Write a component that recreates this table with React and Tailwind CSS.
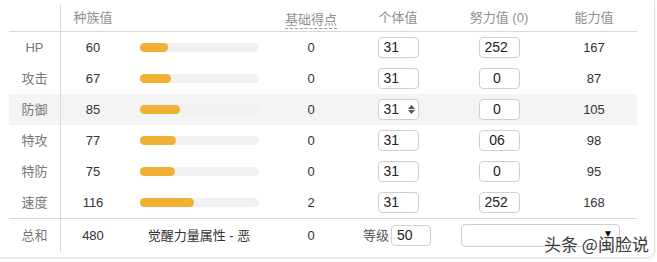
import React from "react";

const stats = [
  { label: "HP", base: 60, ev0: "0", iv: "31", ev: "252", total: 167 },
  { label: "攻击", base: 67, ev0: "0", iv: "31", ev: "0", total: 87 },
  { label: "防御", base: 85, ev0: "0", iv: "31", ev: "0", total: 105, hover: true },
  { label: "特攻", base: 77, ev0: "0", iv: "31", ev: "06", total: 98 },
  { label: "特防", base: 75, ev0: "0", iv: "31", ev: "0", total: 95 },
  { label: "速度", base: 116, ev0: "2", iv: "31", ev: "252", total: 168 },
];

const cols = "grid grid-cols-[52px_64px_148px_76px_98px_104px_86px]";

function Box({ value, spin, center }) {
  return (
    <div className={`h-[21px] w-[41px] rounded-[4px] border border-[#cfcfcf] bg-white flex items-center text-[14px] text-[#222] ${center ? "justify-center pr-[4px]" : "pl-[5px]"}`}>
      <span>{value}</span>
      {spin && (
        <span className="ml-auto mr-[3px] flex flex-col items-center leading-none text-[#555]">
          <svg width="7" height="4" viewBox="0 0 7 4"><path d="M0 4 L3.5 0 L7 4Z" fill="currentColor" /></svg>
          <svg width="7" height="4" viewBox="0 0 7 4" className="mt-[1px]"><path d="M0 0 L3.5 4 L7 0Z" fill="currentColor" /></svg>
        </span>
      )}
    </div>
  );
}

export default function App() {
  return (
    <div className="w-[657px] h-[262px] overflow-hidden bg-white font-['Liberation_Sans','Noto_Sans_CJK_SC',sans-serif] text-[13px]">
      <div className="relative -ml-[6px] -mt-[6px] w-[661px] h-[264px] rounded-[8px] border border-[#e3e3e3] shadow-[0_1px_3px_rgba(0,0,0,0.08)] pl-[14px] pt-[10px]">
        <div className="w-[628px]">
          {/* header */}
          <div className={`${cols} h-[27px] items-center border-b border-[#d9d9d9] text-[#8f8f8f]`}>
            <div className="h-full border-r border-[#d9d9d9]" />
            <div className="text-center">种族值</div>
            <div />
            <div className="flex justify-center">
              <span className="border-b border-dashed border-[#999] leading-[17px] mt-[4px]">基础得点</span>
            </div>
            <div className="text-center">个体值</div>
            <div className="text-center">努力值 (0)</div>
            <div className="text-center">能力值</div>
          </div>

          {stats.map((s) => (
            <div key={s.label} className={`${cols} h-[31px] items-center ${s.hover ? "bg-[#f4f4f5]" : ""}`}>
              <div className="h-full flex items-center justify-center border-r border-[#d9d9d9] text-[#777]">{s.label}</div>
              <div className="text-center text-[#333]">{s.base}</div>
              <div className="pl-[15px]">
                <div className="h-[9px] w-[119px] rounded-full bg-[#f1f1f1]">
                  <div className="h-full rounded-full bg-[#f0b034]" style={{ width: `${(s.base / 255) * 119}px` }} />
                </div>
              </div>
              <div className="text-center text-[#333]">{s.ev0}</div>
              <div className="flex justify-center">
                <Box value={s.iv} spin={s.hover} />
              </div>
              <div className="flex justify-center">
                <Box value={s.ev} center={s.ev.length < 3} />
              </div>
              <div className="text-center text-[#333]">{s.total}</div>
            </div>
          ))}

          {/* total */}
          <div className={`${cols} h-[34px] items-center border-t border-[#d9d9d9]`}>
            <div className="h-full flex items-center justify-center border-r border-[#d9d9d9] text-[#777]">总和</div>
            <div className="text-center text-[#333]">480</div>
            <div className="text-center text-[#333]">觉醒力量属性 - 恶</div>
            <div className="text-center text-[#333]">0</div>
            <div className="col-span-3 flex items-center">
              <span className="ml-[14px] text-[#555]">等级</span>
              <div className="ml-[2px] h-[21px] w-[40px] rounded-[4px] border border-[#cfcfcf] pl-[5px] flex items-center text-[14px] text-[#222]">50</div>
              <div className="ml-[30px] h-[23px] w-[159px] rounded-[4px] border border-[#cfcfcf] flex items-start justify-end pr-[6px] pt-[1px] text-[10px] text-black">▼</div>
            </div>
          </div>
        </div>

        <div className="absolute left-[549px] top-[236px] text-[17px] text-[#3a3a3a] font-['Noto_Sans_CJK_SC',sans-serif] [text-shadow:0_0_2px_#fff,0_0_2px_#fff]">
          头条 @闽脸说
        </div>
      </div>
    </div>
  );
}
